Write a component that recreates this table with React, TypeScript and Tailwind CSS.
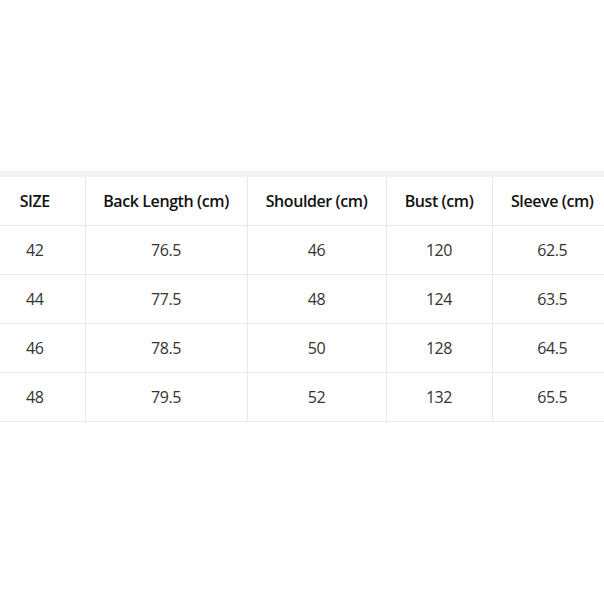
const headers = ['SIZE', 'Back Length (cm)', 'Shoulder (cm)', 'Bust (cm)', 'Sleeve (cm)'];

const rows = [
  ['42', '76.5', '46', '120', '62.5'],
  ['44', '77.5', '48', '124', '63.5'],
  ['46', '78.5', '50', '128', '64.5'],
  ['48', '79.5', '52', '132', '65.5'],
];

const widths = ['w-[100px]', 'w-[162px]', 'w-[139px]', 'w-[106px]', 'w-[120px]'];

export default function App() {
  return (
    <div className="w-[604px] h-[604px] overflow-hidden bg-white font-['Open_Sans',sans-serif]">
      <div className="pt-[171px]">
        <div className="h-[6px] bg-[#f2f2f2]" />
        <table className="w-[627px] ml-[-15px] border-collapse table-fixed">
          <thead>
            <tr className="border-b border-[#e8e8e8]">
              {headers.map((h, i) => (
                <th
                  key={h}
                  className={`${widths[i]} h-[48px] p-0 text-center text-[16px] font-semibold text-[#111] tracking-[-0.4px] ${i > 0 ? 'border-l border-[#e8e8e8]' : ''}`}
                >
                  {h}
                </th>
              ))}
            </tr>
          </thead>
          <tbody>
            {rows.map((r) => (
              <tr key={r[0]} className="border-b border-[#e8e8e8]">
                {r.map((c, i) => (
                  <td
                    key={i}
                    className={`h-[49px] p-0 text-center text-[16px] text-[#333] tracking-[-0.4px] ${i > 0 ? 'border-l border-[#e8e8e8]' : ''}`}
                  >
                    {c}
                  </td>
                ))}
              </tr>
            ))}
          </tbody>
        </table>
      </div>
    </div>
  );
}
